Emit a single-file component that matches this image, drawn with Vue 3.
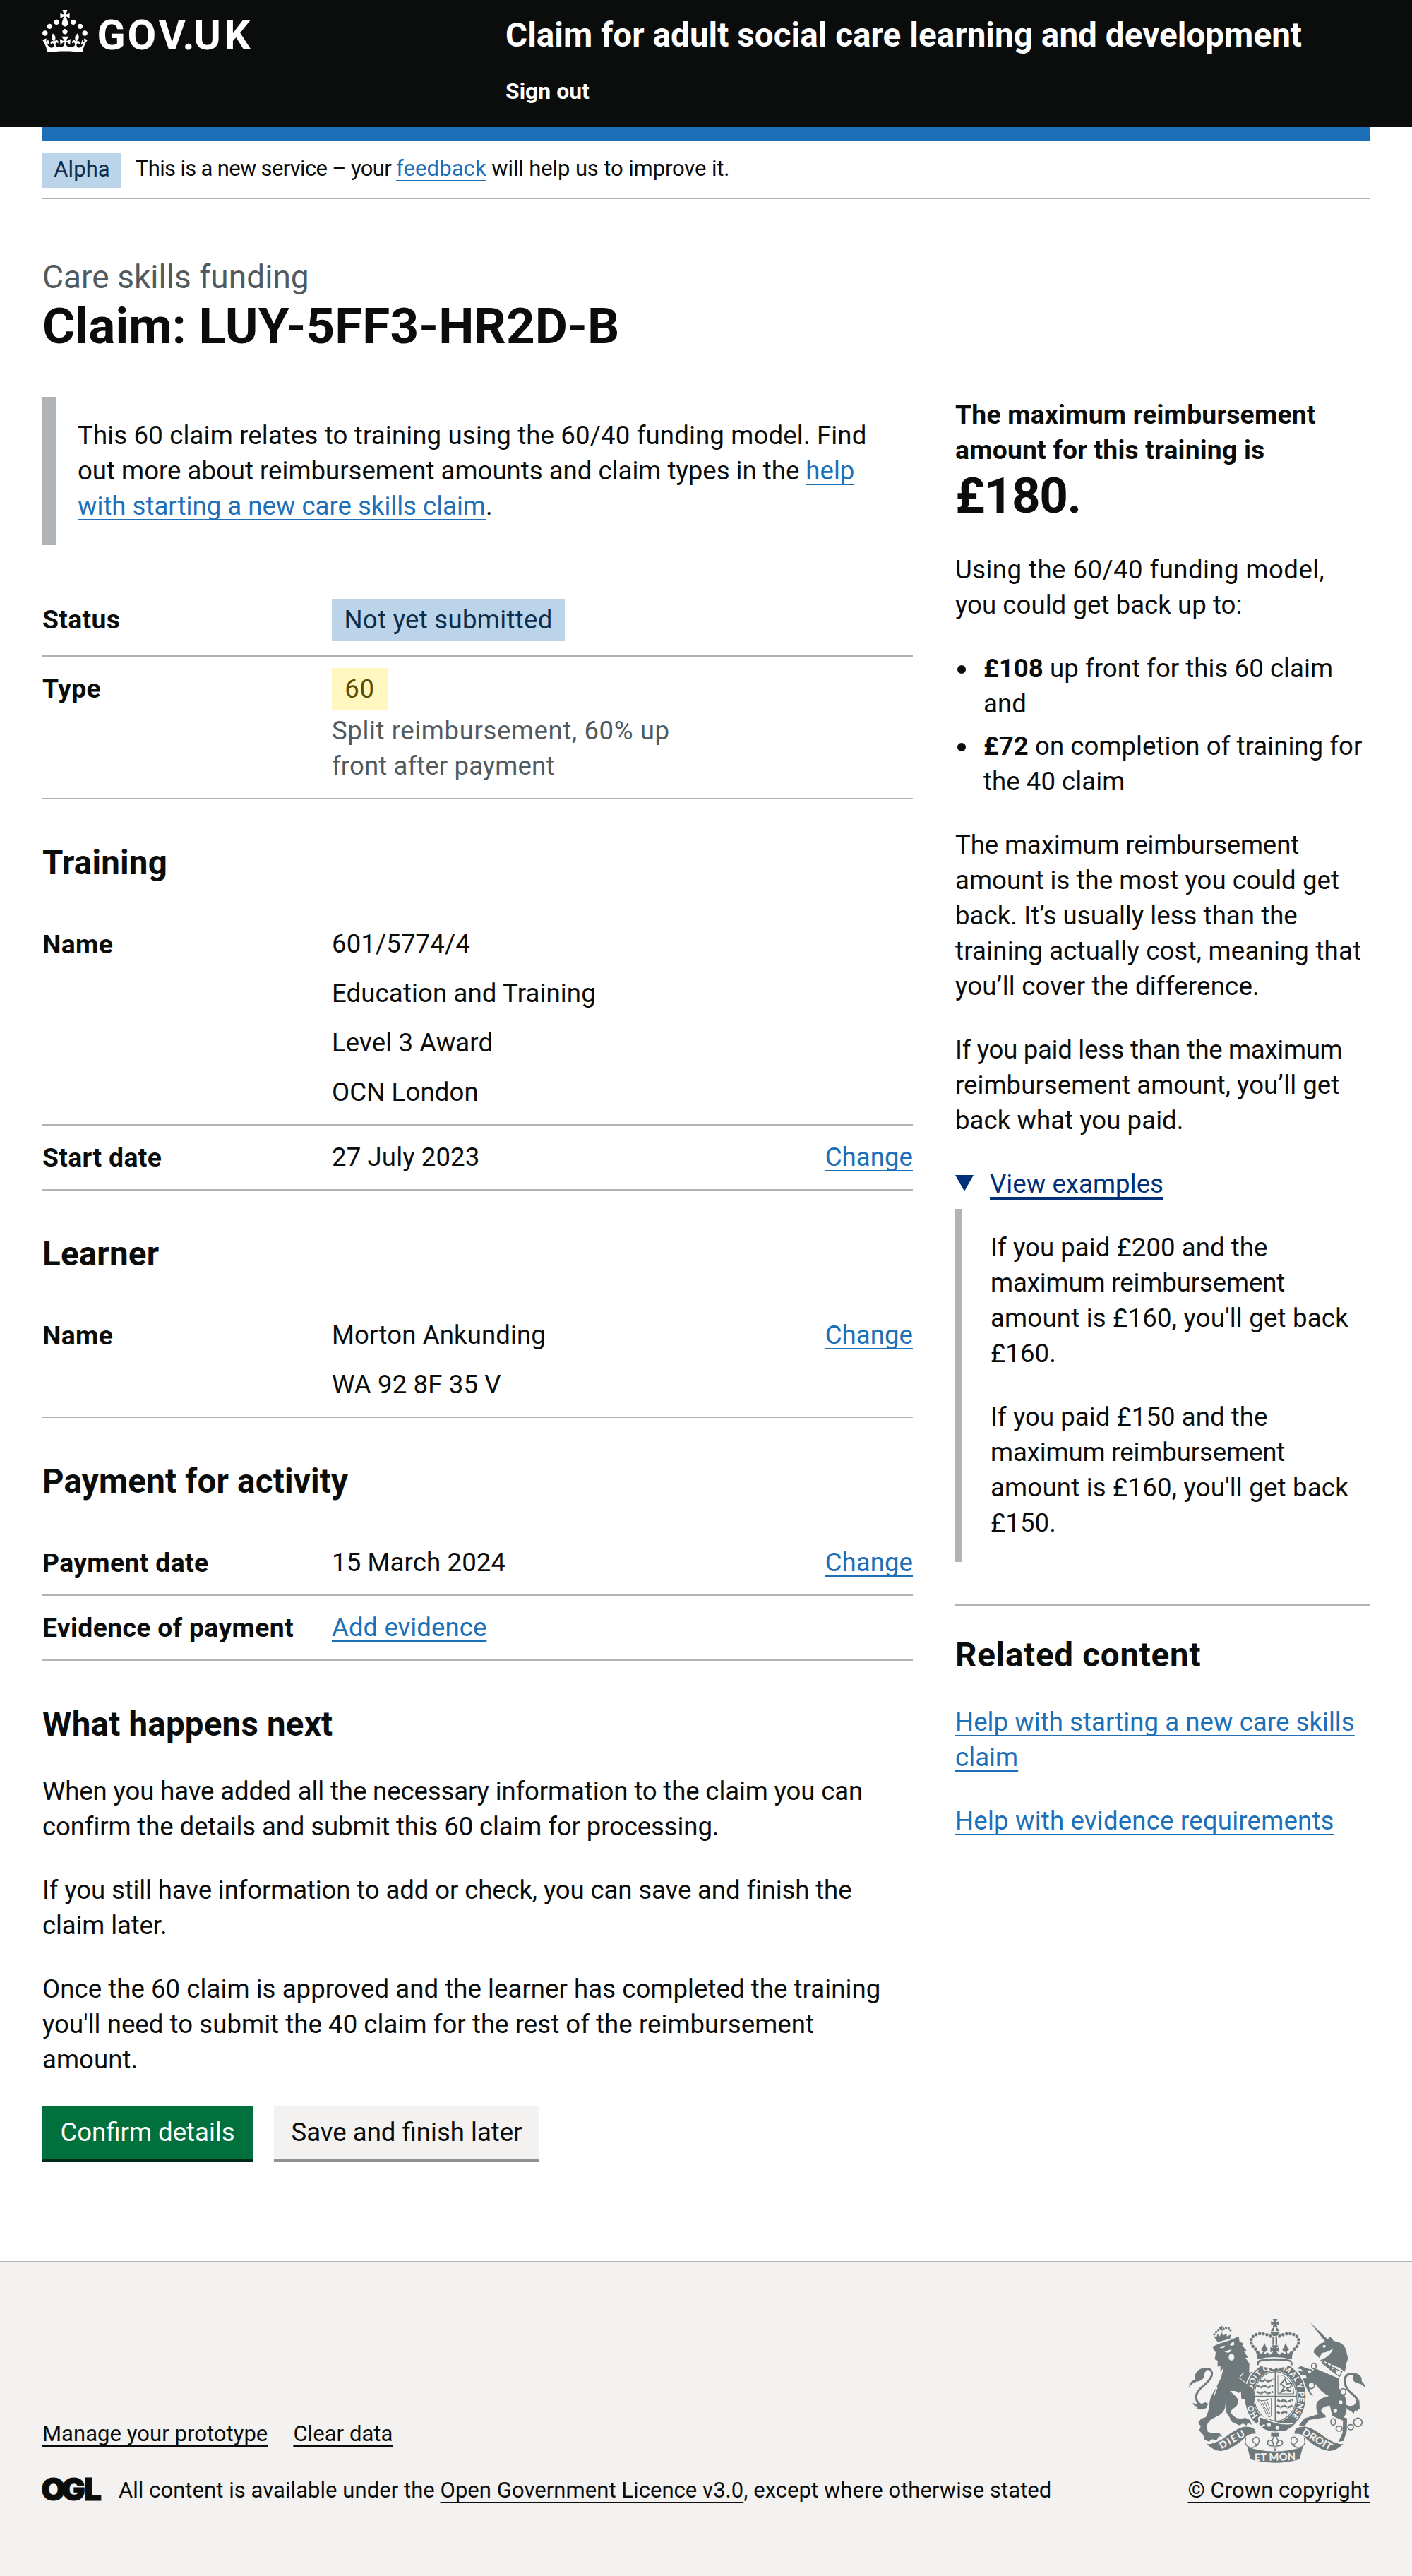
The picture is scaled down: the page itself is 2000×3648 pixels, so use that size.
<script setup>
const sections = [
  {
    title: 'Training',
    rows: [
      { key: 'Name', value: ['601/5774/4', 'Education and Training', 'Level 3 Award', 'OCN London'] },
      { key: 'Start date', value: ['27 July 2023'], change: true },
    ],
  },
  {
    title: 'Learner',
    rows: [{ key: 'Name', value: ['Morton Ankunding', 'WA 92 8F 35 V'], change: true }],
  },
  {
    title: 'Payment for activity',
    rows: [
      { key: 'Payment date', value: ['15 March 2024'], change: true },
      { key: 'Evidence of payment', link: 'Add evidence' },
    ],
  },
]
const chain = [
  [663, 272, 10, 12], [645, 296, 9, 9], [652, 354, 13, 14], [787, 381, 12, 13],
  [745, 509, 10, 14], [770, 538, 13, 11], [819, 532, 12, 11], [850, 511, 18, 18],
]
</script>

<template>
  <div class="page">
    <header class="header">
      <div class="logo">
        <svg width="310" height="80" viewBox="0 0 310 80" fill="#fff" aria-label="GOV.UK">
          <path transform="scale(2)" d="M22.6 10.4c-1 .4-2-.1-2.4-1-.4-.9.1-2 1-2.4.9-.4 2 .1 2.4 1s-.1 2-1 2.4m-5.9 6.7c-.9.4-2-.1-2.4-1-.4-.9.1-2 1-2.4.9-.4 2 .1 2.4 1s-.1 2-1 2.4m10.8-3.7c-1 .4-2-.1-2.4-1-.4-.9.1-2 1-2.4.9-.4 2 .1 2.4 1s0 2-1 2.4m3.3 4.8c-1 .4-2-.1-2.4-1-.4-.9.1-2 1-2.4.9-.4 2 .1 2.4 1s-.1 2-1 2.4M17 4.7l2.3 1.2V2.5l-2.3.7-.2-.2.9-3h-3.4l.9 3-.2.2c-.1.1-2.3-.7-2.3-.7v3.4L15 4.7c.1.1.1.2.2.2l-1.3 4c-.1.2-.1.4-.1.6 0 1.1.8 2 1.9 2.2h.7c1-.2 1.9-1.1 1.9-2.1 0-.2 0-.4-.1-.6l-1.3-4c-.1-.2 0-.2.1-.3m-7.6 5.7c.9.4 2-.1 2.4-1 .4-.9-.1-2-1-2.4-.9-.4-2 .1-2.4 1s0 2 1 2.4m-5 3c.9.4 2-.1 2.4-1 .4-.9-.1-2-1-2.4-.9-.4-2 .1-2.4 1s.1 2 1 2.4m-3.2 4.8c.9.4 2-.1 2.4-1 .4-.9-.1-2-1-2.4-.9-.4-2 .1-2.4 1s0 2 1 2.4m14.8 11c4.4 0 8.6.3 12.3.8 1.1-4.5 2.4-7 3.7-8.8l-2.5-.9c.2 1.3.3 1.9 0 2.7-.4-.4-.8-1.1-1.1-2.3l-1.2 4c.7-.5 1.3-.8 2-.9-1.1 2.5-2.6 3.1-3.5 3-1.1-.2-1.7-1.2-1.5-2.1.3-1.2 1.5-1.5 2.1-.1 1.1-2.3-.8-3-2-2.3 1.9-1.9 2.1-3.5.6-5.6-2.1 1.6-2.1 3.2-1.2 5.5-1.2-1.4-3.2-.6-2.5 1.6.9-1.4 2.1-.5 1.9.8-.2 1.1-1.7 2.1-3.5 1.9-2.7-.2-2.9-2.1-2.9-3.6.7-.1 1.9.5 2.9 1.9l.4-4.3c-1.1 1.1-2.1 1.4-3.2 1.4.4-1.2 2.1-3 2.1-3h-5.4s1.7 1.9 2.1 3c-1.1 0-2.1-.2-3.2-1.4l.4 4.3c1-1.4 2.2-2 2.9-1.9-.1 1.5-.2 3.4-2.9 3.6-1.9.2-3.4-.8-3.5-1.9-.2-1.3 1-2.2 1.9-.8.7-2.3-1.2-3-2.5-1.6.9-2.2.9-3.9-1.2-5.5-1.5 2-1.3 3.7.6 5.6-1.2-.7-3.1 0-2 2.3.6-1.4 1.8-1.1 2.1.1.2.9-.3 1.9-1.5 2.1-.9.2-2.4-.5-3.5-3 .6 0 1.2.3 2 .9l-1.2-4c-.3 1.1-.7 1.9-1.1 2.3-.3-.8-.2-1.4 0-2.7l-2.9.9C1.3 23 2.6 25.5 3.7 30c3.7-.5 7.9-.8 12.3-.8" />
          <text class="wordmark" y="56" x="77.5 120.5 164.5 198.5 214 257.5">GOV.UK</text>
        </svg>
      </div>
      <div class="service">
        <a class="service-name">Claim for adult social care learning and development</a>
        <a class="sign-out">Sign out</a>
      </div>
    </header>

    <div class="container">
      <div class="blue-bar"></div>
      <div class="phase">
        <strong class="tag tag-phase">Alpha</strong>
        <span class="phase-text"><span class="phase-lead">This is a new service – your </span><a class="link">feedback</a> will help us to improve it.</span>
      </div>

      <h1 class="title">
        <span class="caption">Care skills funding</span>
        <span class="title-text">Claim: LUY-5FF3-HR2D-B</span>
      </h1>

      <div class="columns">
        <main class="main">
          <div class="inset">
            <span class="inset-lead">This 60 claim relates to training using the 60/40 funding model. Find</span><br />
            out more about reimbursement amounts and claim types in the <a class="link">help</a><br />
            <a class="link">with starting a new care skills claim</a>.
          </div>

          <dl class="list list-top">
            <div class="row row-status">
              <dt>Status</dt>
              <dd><span class="tag tag-blue">Not yet submitted</span></dd>
            </div>
            <div class="row row-type">
              <dt>Type</dt>
              <dd>
                <span class="tag tag-yellow">60</span>
                <div class="hint"><span class="hint-lead">Split reimbursement, 60% up</span><br />front after payment</div>
              </dd>
            </div>
          </dl>

          <template v-for="s in sections" :key="s.title">
            <h2>{{ s.title }}</h2>
            <dl class="list">
              <div v-for="r in s.rows" :key="r.key" class="row">
                <dt>{{ r.key }}</dt>
                <dd>
                  <p v-for="v in r.value" :key="v">{{ v }}</p>
                  <a v-if="r.link" class="link">{{ r.link }}</a>
                </dd>
                <dd v-if="r.change" class="action"><a class="link">Change</a></dd>
              </div>
            </dl>
          </template>

          <h2>What happens next</h2>
          <p class="body tight">When you have added all the necessary information to the claim you can<br />confirm the details and submit this 60 claim for processing.</p>
          <p class="body tight">If you still have information to add or check, you can save and finish the<br />claim later.</p>
          <p class="body">Once the 60 claim is approved and the learner has completed the training<br />you'll need to submit the 40 claim for the rest of the reimbursement<br />amount.</p>
          <div class="buttons">
            <button class="btn btn-primary">Confirm details</button>
            <button class="btn btn-secondary">Save and finish later</button>
          </div>
        </main>

        <aside class="side">
          <p class="max">The maximum reimbursement<br />amount for this training is</p>
          <p class="amount">£180.</p>
          <p class="body"><span class="looser">Using the 60/40 funding model,</span><br />you could get back up to:</p>
          <ul>
            <li><b>£108</b> up front for this 60 claim<br />and</li>
            <li><b>£72</b> on completion of training for<br />the 40 claim</li>
          </ul>
          <p class="body"><span class="tight">The maximum reimbursement</span><br />amount is the most you could get<br />back. It’s usually less than the<br /><span class="loose">training actually cost, meaning that</span><br /><span class="loose">you’ll cover the difference.</span></p>
          <p class="body"><span class="tighter">If you paid less than the maximum</span><br />reimbursement amount, you’ll get<br />back what you paid.</p>
          <div class="summary"><i class="arrow"></i><span>View examples</span></div>
          <div class="details">
            <p class="body">If you paid £200 and the<br /><span class="tight">maximum reimbursement</span><br /><span class="loose">amount is £160, you'll get back</span><br />£160.</p>
            <p class="body">If you paid £150 and the<br /><span class="tight">maximum reimbursement</span><br /><span class="loose">amount is £160, you'll get back</span><br />£150.</p>
          </div>
          <div class="related">
            <h2>Related content</h2>
            <p class="body"><a class="link">Help with starting a new care skills<br />claim</a></p>
            <p class="body loose"><a class="link">Help with evidence requirements</a></p>
          </div>
        </aside>
      </div>
    </div>

    <footer class="footer">
      <div class="meta">
        <div class="meta-links"><a>Manage your prototype</a><a>Clear data</a></div>
        <div class="licence">
          <svg width="82" height="34" viewBox="0 0 82 34" class="ogl" aria-label="OGL">
            <text y="33" x="-1.5 27.5 59">OGL</text>
          </svg>
          <span>All content is available under the <a>Open Government Licence v3.0</a>, except where otherwise stated</span>
        </div>
      </div>
      <div class="copyright">
        <svg class="arms" width="250" height="204" viewBox="132 72 750 612">
          <defs>
            <path id="garter" d="M428 485A100 117 0 1 1 549 503" />
          </defs>
          <!-- lion -->
          <path d="M232 190l30-14q40-10 82-30l3 22 20 10-9 6 20 24h-13l19 28h-12l17 26-1 40 18-10q-20 18-24 44l18 24 8 40-3 24-10-6-11 8-8-14-14-2-3-18 13-4-10-12-18 10-14-8-24 0q14 12 28 26 17 20 0 38l-20 16q-8 12 4 22l14 12q20 6 40 0l20 10 7 20-17-9-6 13-14-11-15 9-22-10q-19-7-19-23l-14-20-5-46q5 44-42 64-36 14-36 42l3 20q22 10 48 4l14 17-14-2-11 18-17-5-16 10-20-10-2-17-18-20 6-17-10-18 12-15 20-7q12-23 15-48-2-32 25-70l25-50 10-42-13 18v-28l-12 6v-26l-12-5 4-30-7-10Z" />
          <path d="M206 440q-40 2-44-38 4-24 32-46 38-32 36-54-3-22-30-18" class="stroke" stroke-width="9" />
          <path d="M215 281q-34-7-51 18-14 18-4 30-26 6-28 34 16-24 44-27 24-8 22-34 8-12 17-21ZM148 428q26 12 54-2l12 6-8 18q-24 12-42 2l8-7q-20-2-24-17Z" />
          <path d="M262 190l24-5-6 10-14 1ZM304 180l18-13 4 14-12 5ZM283 211l30-11-2 10-14 6Z" class="light" />
          <ellipse cx="313" cy="234" rx="12" ry="15" class="light" />
          <path d="M345 322l62 48M238 400l14-38M365 300l-14 16" class="lstroke" stroke-width="4" />
          <path d="M240 137q20-28 34-20 32-20 38 14" class="stroke" stroke-width="10" stroke-dasharray="0 12" stroke-linecap="round" />
          <path d="M236 143l13 6 5-14 9 11 8-17 8 13 13-8 1 12 17-8-3 18-53 14ZM258 106l12 3 1-9 7 9-5 2 2 18-7-14-9-3Z" />
          <!-- unicorn -->
          <path d="M647 86l80 78-16 5ZM714 168l18-22 16 20q42 4 52 38l8 36-7 22-6 34-24-16-76-34q44-20 50-50-20 18-48 20l-10 22-12-10-13-14 3-14 26-24Z" />
          <path d="M668 282l100 42q6 26 2 42 32 30 30 66 8 36-10 58l14 4-1 54-14 42-22 4 18-38 2-52-46-20-10-44q-34 2-38 24l20 18v8l-72 12-16 24-26-2 24-30 58-18q-14-24-4-52 20-20 50-24-28-14-40-30l-20-24-30-10-8-24-22-2-14-22 24 8 22 6 14-4Z" />
          <path d="M590 282l18-10 36 14 14 28-28-4-20-24ZM606 326l48-5 12 24-28-2 10 40 14 16-16-8-26-46-14-12Z" />
          <path d="M692 246q20 30 80 70l10-20q-60-24-90-50Z" class="light" stroke="#6f797b" stroke-width="4" />
          <path d="M698 262l6-13 8 18 8-14 7 24 11-15 4 26 11-13 6 30Z" />
          <path d="M838 440q22-22-6-44-42-32-38-66 4-28 36-24" class="stroke" stroke-width="9" />
          <path d="M820 306q30-10 45 14l2 18q14 10 15 30-12-20-30-22-28-6-22-32ZM790 428q20 22 50 8l16-22 2 38-14 12-6-4-6 14-10-10-16-8Z" />
          <ellipse v-for="(c, i) in chain" :key="i" :cx="c[0]" :cy="c[1]" :rx="c[2]" :ry="c[3]" class="link-ring" />
          <circle cx="777" cy="426" r="8" class="light" /><circle cx="754" cy="462" r="8" class="light" />
          <circle cx="707" cy="188" r="6" class="light" />
          <!-- garter and shield -->
          <ellipse cx="499" cy="402" rx="134" ry="154" class="light" />
          <ellipse cx="499" cy="402" rx="129" ry="148" />
          <ellipse cx="499" cy="401" rx="94" ry="109" class="light" />
          <ellipse cx="499" cy="401" rx="90" ry="105" class="stroke" stroke-width="4" />
          <text class="motto" font-size="34"><textPath href="#garter" startOffset="2">HO</textPath></text>
          <text class="motto" font-size="34"><textPath href="#garter" startOffset="118" textLength="405">SOIT QUI MAL Y PENSE</textPath></text>
          <path d="M499 297v207M410 401h180" class="stroke" stroke-width="5" />
          <g class="stroke" stroke-width="8">
            <path d="M430 330l14 8 12-8 14 8 22-10M422 355l16 8 14-8 16 8 22-8M420 382l18 6 14-8 16 8 22-6" stroke-dasharray="14 3" />
            <path d="M508 416l14 8 12-8 14 8 26-8M506 440l16 8 14-8 16 8 20-8M506 468l18 6 14-8 14 6" stroke-dasharray="14 3" />
          </g>
          <g class="stroke" stroke-width="3">
            <path d="M510 310v80h68q0-50-46-78ZM424 416q32 8 58-6v74q-12 10-20-6-10-30-38-62ZM438 418l34 62M450 417l26 56M462 416l14 36" />
            <path d="M522 384l16-24-16-12 18-20 8 20 22-4-6 18-16 4 18 16-22-8Z" stroke-width="6" />
          </g>
          <path d="M424 500l30-10 40 14 66 8 24 4-12 12-28 18-46 4-44-12-30-18Z" />
          <path d="M452 492q60 34 124 24" class="lstroke" stroke-width="5" />
          <path d="M458 494q-34-14-28 8 4 10-4 12 0 18 18 14l10-8" class="lstroke" stroke-width="7" />
          <circle cx="472" cy="522" r="8" class="light" /><circle cx="508" cy="534" r="8" class="light" />
          <!-- lion's paw over the garter -->
          <path d="M350 326l56 46 5 44-8 12-8-12-12 10-8-12-20-4Z" />
          <!-- crown -->
          <ellipse cx="497" cy="258" rx="78" ry="22" class="light" />
          <path d="M421 268q-2-22 20-24 56-10 112 0 20 2 20 24-4 2-6-2 4-12-16-14-54-8-108 0-16 2-14 14-4 4-8 2Z" />
          <path d="M412 204l18 6 10 12 8-12 6 12 12-8 10 10 12-8h18l12 8 10-10 12 8 6-12 8 12 10-12 18-6q-14 16-12 40-76-20-148 0 2-22-10-40Z" />
          <path d="M415 200q-34-30-8-56 30-20 72 2M580 200q34-30 8-56-30-20-72 2" class="stroke" stroke-width="14" stroke-dasharray="0 15.5" stroke-linecap="round" />
          <path d="M453 174l9 20-4 18h-10l-4-18ZM543 174l9 20-4 18h-10l-4-18ZM438 198q15-8 30 0l-4 12-11-8-11 8ZM528 198q15-8 30 0l-4 12-11-8-11 8ZM482 184h30l-8 12 12-4v22l-12-6 6 14h-26l6-14-12 6v-22l12 4ZM487 146h7v36h-7ZM500 146h7v36h-7ZM479 128h37q-2 16-18 17-17-1-19-17ZM480 124q4-14 14-17v17ZM516 124q-4-14-14-17v17ZM488 72h20l-5 14 12-5v18l-12-5 5 12h-20l5-12-12 5v-18l12 5Z" />
          <!-- lily -->
          <path d="M481 554h34v18h-34Z" />
          <path d="M498 566q-20 24-8 36-4-18-18-14-14 10 2 22l20 2v10q4 18 8 0v-10l20-2q16-12 2-22-14-4-18 14 12-12-8-36Z" class="light" stroke="#6f797b" stroke-width="5" />
          <!-- scroll -->
          <path d="M208 604q40 0 84-34 60-44 88-40 38 0 35 30-30-2-44 16-58 54-106 57-26 0-57-29Z" />
          <path d="M788 604q-40 0-84-34-60-44-88-40-38 0-35 30 30-2 44 16 58 54 106 57 26 0 57-29Z" />
          <path d="M374 578q-12 40 30 40l20-10q-36-18-10-34 14-4 16 14 2 20-26 30M622 578q12 40-30 40l-20-10q36-18 10-34-14-4-16 14-2 20 26 30" class="light" stroke="#6f797b" stroke-width="4" />
          <path d="M380 616q118 38 236 0l-14 52q-104 30-208 0Z" />
          <text class="motto" font-size="42" text-anchor="middle" textLength="118" transform="translate(322 597) rotate(-29)">DIEU</text>
          <text class="motto" font-size="42" text-anchor="middle" textLength="140" lengthAdjust="spacingAndGlyphs" transform="translate(670 596) rotate(30)">DROIT</text>
          <text class="motto" font-size="44" text-anchor="middle" textLength="174" transform="translate(498 674) rotate(-1)">ET MON</text>
        </svg>
        <a>© Crown copyright</a>
      </div>
    </footer>
  </div>
</template>

<style>
body { margin: 0; background: #fff; }
</style>

<style scoped>
.page { width: 2000px; height: 3648px; display: flex; flex-direction: column; font-family: Roboto, Arial, sans-serif; font-size: 36.6px; line-height: 50px; color: #0b0c0c; white-space: nowrap; letter-spacing: .05px; }
p, h1, h2, dl, dd, dt, ul { margin: 0; padding: 0; }
.loose { letter-spacing: .2px; }
.looser { letter-spacing: .45px; }
.tight { letter-spacing: -.13px; }
.tighter { letter-spacing: -.3px; }
.header { box-sizing: border-box; height: 180px; background: #0b0c0c; color: #fff; display: flex; padding: 14px 60px 0; }
.logo { width: 656px; }
.logo svg { display: block; }
.wordmark { font-family: Roboto, sans-serif; font-weight: 700; font-size: 59px; }
.service { display: flex; flex-direction: column; font-weight: 700; }
.service-name { font-size: 47.6px; line-height: 60px; margin-top: 6px; }
.sign-out { font-size: 31.8px; line-height: 40px; margin-top: 29px; }
.container { width: 1880px; margin: 0 60px; }
.blue-bar { height: 20px; background: #1d70b8; }
.phase { box-sizing: border-box; height: 82px; border-bottom: 2px solid #b1b4b6; padding-top: 16px; display: flex; align-items: flex-start; font-size: 31px; }
.tag { display: inline-block; }
.tag-phase { font-weight: 400; background: #bbd4ea; color: #0c2d4a; width: 112px; height: 50px; line-height: 48px; text-align: center; }
.phase-text { margin-left: 20px; line-height: 46px; letter-spacing: -.12px; }
.phase-lead { letter-spacing: -.68px; }
.phase-text .link { letter-spacing: .1px; }
.link { color: #1d70b8; text-decoration: underline; text-decoration-thickness: 2px; text-underline-offset: 6px; text-decoration-skip-ink: none; }
.title { margin-top: 80px; display: flex; flex-direction: column; }
.caption { font-weight: 400; font-size: 46px; line-height: 60px; color: #505a5f; }
.title-text { font-size: 71px; line-height: 80px; }
.columns { display: flex; gap: 60px; margin-top: 60px; }
.main { width: 1233px; }
.side { width: 587px; }
.inset { border-left: 20px solid #b1b4b6; padding: 30px 0 30px 30px; letter-spacing: 0; }
.inset-lead { letter-spacing: .15px; }
.list-top { margin-top: 60px; }
.row { box-sizing: border-box; display: flex; border-bottom: 2px solid #b1b4b6; padding: 20px 0; }
dt { width: 410px; font-weight: 700; font-size: 37.3px; letter-spacing: .35px; flex: none; }
dd { flex: none; }
dd p { letter-spacing: .12px; }
dd p + p { margin-top: 20px; }
.action { margin-left: auto; }
.row-status { height: 98px; padding: 20px 0 0; }
.row-type { height: 202px; padding: 20px 0 0; }
.row-status .tag, .row-type .tag { box-sizing: border-box; height: 60px; line-height: 59px; margin-top: -4px; display: block; text-align: center; }
.tag-blue { background: #bbd4ea; color: #0c2d4a; letter-spacing: .3px; width: 330px; }
.tag-yellow { background: #fff7bf; color: #594d00; letter-spacing: .8px; width: 79px; }
.hint { color: #505a5f; margin-top: 4px; letter-spacing: .1px; }
.hint-lead { letter-spacing: .6px; }
h2 { font-size: 47.5px; line-height: 60px; letter-spacing: .2px; }
.main h2 { margin-top: 60px; margin-bottom: 40px; }
.body { margin-bottom: 40px; }
.buttons { display: flex; gap: 30px; }
.btn { font: inherit; letter-spacing: 0; border: 0; height: 76px; line-height: 72px; padding: 0; margin: 0; }
.btn-primary { width: 298px; background: #00703c; color: #fff; box-shadow: 0 4px 0 #002d18; }
.btn-secondary { width: 376px; background: #f3f2f1; color: #0b0c0c; box-shadow: 0 4px 0 #929191; }
.max { font-weight: 700; font-size: 37.3px; letter-spacing: .2px; }
.amount { font-weight: 700; font-size: 71px; line-height: 80px; letter-spacing: -1.5px; margin-bottom: 40px; }
ul { list-style: none; margin: 0 0 40px; }
li { position: relative; padding-left: 40px; }
li + li { margin-top: 10px; }
li::before { content: ""; position: absolute; left: 3px; top: 20px; width: 12px; height: 12px; border-radius: 50%; background: #0b0c0c; }
.summary { display: flex; height: 60px; color: #003078; }
.arrow { width: 0; height: 0; border: 13.5px solid transparent; border-top: 23px solid #003078; border-bottom: 0; margin-top: 12px; margin-right: 23px; }
.summary span { text-decoration: underline; text-decoration-thickness: 4px; text-underline-offset: 6px; text-decoration-skip-ink: none; }
.details { border-left: 10px solid #b1b4b6; padding: 30px 0 30px 40px; }
.details .body:last-child { margin-bottom: 0; }
.related { margin-top: 60px; border-top: 2px solid #b1b4b6; padding-top: 40px; }
.related h2 { margin-bottom: 40px; letter-spacing: .75px; }
.footer { margin-top: auto; box-sizing: border-box; height: 446px; background: #f3f2f1; border-top: 2px solid #b1b4b6; display: flex; justify-content: space-between; padding: 80px 60px 0; font-size: 31px; line-height: 40px; }
.footer a { text-decoration: underline; text-decoration-thickness: 2px; text-underline-offset: 6px; text-decoration-skip-ink: none; }
.meta { padding-top: 143px; }
.meta-links { display: flex; gap: 36px; }
.licence { display: flex; margin-top: 40px; }
.ogl { margin: 1px 26px 0 0; overflow: visible; }
.ogl text { font-family: Inter, sans-serif; font-weight: 900; font-size: 44px; fill: #0b0c0c; stroke: #0b0c0c; stroke-width: 1.2; letter-spacing: 0; }
.copyright { display: flex; flex-direction: column; align-items: flex-end; }
.arms { display: block; margin: 0 6px 19px 0; fill: #6f797b; overflow: visible; }
.arms .light { fill: #f3f2f1; }
.arms .stroke { fill: none; stroke: #6f797b; }
.arms .lstroke { fill: none; stroke: #f3f2f1; }
.arms .link-ring { fill: #f3f2f1; stroke: #6f797b; stroke-width: 5; }
.arms .motto { fill: #f3f2f1; font-family: Lato, sans-serif; font-weight: 900; }
</style>
